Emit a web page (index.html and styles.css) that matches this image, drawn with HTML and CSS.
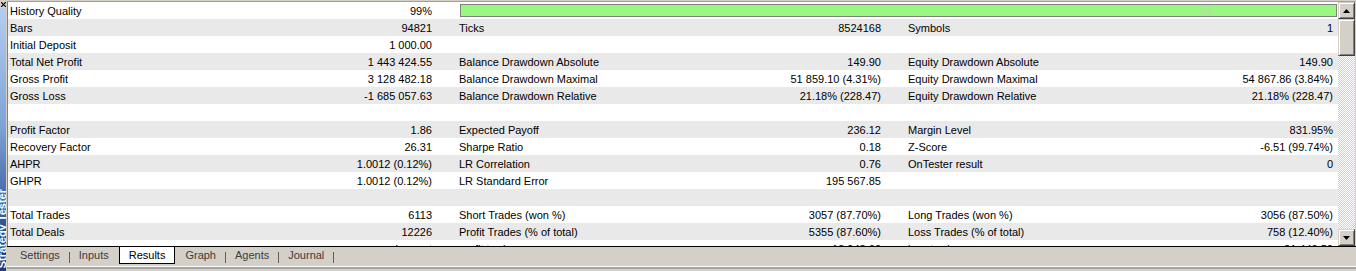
FILE: index.html
```html
<!DOCTYPE html>
<html lang="en">

<head>
  <meta charset="UTF-8" />
  <title>Strategy Tester - Results</title>
  <link rel="stylesheet" href="styles.css">
</head>

<body>
  <div class="tester">

    <!-- side caption strip -->
    <div class="side">
      <div class="side-close">
        <svg width="5" height="5" viewBox="0 0 5 5"><path d="M0 0L5 5M5 0L0 5" stroke="#000" stroke-width="1.2" /></svg>
      </div>
      <div class="side-title"><span>Strategy Tester</span></div>
    </div>

    <div class="panel">
      <div class="report">
        <div class="grid">
          <div class="row">
            <div class="cell"><span>History Quality</span><span>99%</span></div>
            <div class="cell quality"><div class="quality-bar"></div></div>
          </div>
          <div class="row">
            <div class="cell"><span>Bars</span><span>94821</span></div>
            <div class="cell"><span>Ticks</span><span>8524168</span></div>
            <div class="cell"><span>Symbols</span><span>1</span></div>
          </div>
          <div class="row">
            <div class="cell"><span>Initial Deposit</span><span>1 000.00</span></div>
            <div class="cell"></div>
            <div class="cell"></div>
          </div>
          <div class="row">
            <div class="cell"><span>Total Net Profit</span><span>1 443 424.55</span></div>
            <div class="cell"><span>Balance Drawdown Absolute</span><span>149.90</span></div>
            <div class="cell"><span>Equity Drawdown Absolute</span><span>149.90</span></div>
          </div>
          <div class="row">
            <div class="cell"><span>Gross Profit</span><span>3 128 482.18</span></div>
            <div class="cell"><span>Balance Drawdown Maximal</span><span>51 859.10 (4.31%)</span></div>
            <div class="cell"><span>Equity Drawdown Maximal</span><span>54 867.86 (3.84%)</span></div>
          </div>
          <div class="row">
            <div class="cell"><span>Gross Loss</span><span>-1 685 057.63</span></div>
            <div class="cell"><span>Balance Drawdown Relative</span><span>21.18% (228.47)</span></div>
            <div class="cell"><span>Equity Drawdown Relative</span><span>21.18% (228.47)</span></div>
          </div>
          <div class="row"></div>
          <div class="row">
            <div class="cell"><span>Profit Factor</span><span>1.86</span></div>
            <div class="cell"><span>Expected Payoff</span><span>236.12</span></div>
            <div class="cell"><span>Margin Level</span><span>831.95%</span></div>
          </div>
          <div class="row">
            <div class="cell"><span>Recovery Factor</span><span>26.31</span></div>
            <div class="cell"><span>Sharpe Ratio</span><span>0.18</span></div>
            <div class="cell"><span>Z-Score</span><span>-6.51 (99.74%)</span></div>
          </div>
          <div class="row">
            <div class="cell"><span>AHPR</span><span>1.0012 (0.12%)</span></div>
            <div class="cell"><span>LR Correlation</span><span>0.76</span></div>
            <div class="cell"><span>OnTester result</span><span>0</span></div>
          </div>
          <div class="row">
            <div class="cell"><span>GHPR</span><span>1.0012 (0.12%)</span></div>
            <div class="cell"><span>LR Standard Error</span><span>195 567.85</span></div>
            <div class="cell"></div>
          </div>
          <div class="row"></div>
          <div class="row">
            <div class="cell"><span>Total Trades</span><span>6113</span></div>
            <div class="cell"><span>Short Trades (won %)</span><span>3057 (87.70%)</span></div>
            <div class="cell"><span>Long Trades (won %)</span><span>3056 (87.50%)</span></div>
          </div>
          <div class="row">
            <div class="cell"><span>Total Deals</span><span>12226</span></div>
            <div class="cell"><span>Profit Trades (% of total)</span><span>5355 (87.60%)</span></div>
            <div class="cell"><span>Loss Trades (% of total)</span><span>758 (12.40%)</span></div>
          </div>
          <div class="row">
            <div class="cell"><span></span><span>Largest</span></div>
            <div class="cell"><span>profit trade</span><span>18 943.60</span></div>
            <div class="cell"><span>loss trade</span><span>-21 440.50</span></div>
          </div>
        </div>

        <div class="scrollbar">
          <div class="sb-btn">
            <svg width="7" height="4" viewBox="0 0 7 4"><path d="M3.5 0L7 4H0z" fill="#000" /></svg>
          </div>
          <div class="sb-thumb"></div>
          <div class="sb-track"></div>
          <div class="sb-btn">
            <svg width="7" height="4" viewBox="0 0 7 4"><path d="M0 0H7L3.5 4z" fill="#000" /></svg>
          </div>
        </div>
      </div>

      <div class="tabs">
        <div class="tab">Settings</div>
        <span class="sep"></span>
        <div class="tab">Inputs</div>
        <div class="tab active">Results</div>
        <div class="tab">Graph</div>
        <span class="sep"></span>
        <div class="tab">Agents</div>
        <span class="sep"></span>
        <div class="tab">Journal</div>
        <span class="sep"></span>
      </div>
      <div class="panel-foot"></div>
    </div>
  </div>
</body>

</html>
```

FILE: styles.css
```css
* {
  box-sizing: border-box;
}

body {
  margin: 0;
  width: 1356px;
  height: 271px;
  overflow: hidden;
  background: #d4d0c8;
  font-family: "Liberation Sans", Arial, sans-serif;
  font-size: 11px;
  color: #000;
}

.tester {
  display: flex;
  height: 271px;
}

/* side caption */
.side {
  width: 6px;
  display: flex;
  flex-direction: column;
  overflow: hidden;
}

.side-close {
  height: 8px;
  background: #d4d0c8;
  display: flex;
  align-items: center;
  justify-content: center;
}

.side-title {
  flex: 1;
  background: linear-gradient(#b3cdef, #7fa3d6 45%, #2c4d92 85%, #1d3a7c);
  overflow: hidden;
  display: flex;
  align-items: flex-end;
}

.side-title span {
  writing-mode: vertical-rl;
  transform: rotate(180deg);
  color: #fff;
  font-weight: bold;
  white-space: nowrap;
  line-height: 12px;
  margin: 0 0 3px -4px;
}

/* main panel */
.panel {
  flex: 1;
  min-width: 0;
  padding: 1px 0 0 1px;
  display: flex;
  flex-direction: column;
}

.report {
  display: flex;
  height: 245px;
  background: #fff;
  border-top: 1px solid #a0a0a0;
  border-left: 1px solid #808080;
  border-right: 1px solid #d4d0c8;
}

.grid {
  flex: 1;
  min-width: 0;
  overflow: hidden;
}

.row {
  display: grid;
  grid-template-columns: 426px 426px 1fr;
  column-gap: 23px;
  padding: 1px 3px 0 0;
  height: 17px;
  line-height: 16px;
}

.row:nth-child(even) {
  background: #e9e9e9;
}

.cell {
  display: flex;
  justify-content: space-between;
  padding: 0 2px;
  white-space: nowrap;
}

.quality {
  grid-column: 2 / 4;
  padding: 1px 0 0 3px;
  margin-right: -2px;
}

.quality-bar {
  flex: 1;
  height: 13px;
  border: 1px solid #808080;
  background: linear-gradient(90deg, #98f87f 739px, #a3ef90 739px, #a3ef90 752px, #98f87f 752px);
}

/* scrollbar */
.scrollbar {
  width: 17px;
  display: flex;
  flex-direction: column;
}

.sb-btn,
.sb-thumb {
  background: #d4d0c8;
  border: 1px solid;
  border-color: #d4d0c8 #404040 #404040 #d4d0c8;
  box-shadow: inset 1px 1px #fff, inset -1px -1px #808080;
}

.sb-btn {
  height: 17px;
  display: flex;
  align-items: center;
  justify-content: center;
}

.sb-thumb {
  height: 37px;
}

.sb-track {
  flex: 1;
  background: repeating-conic-gradient(#d4d0c8 0 25%, #fff 0 50%) 0 0 / 2px 2px;
}

/* tabs */
.tabs {
  height: 21px;
  display: flex;
  align-items: flex-start;
  padding-left: 4px;
  border-top: 1px solid #000;
  border-bottom: 1px solid #fff;
}

.tab {
  height: 17px;
  line-height: 17px;
  padding: 0 9px;
  color: #3c3c3c;
}

.tab.active {
  background: #fff;
  color: #000;
  border: 1px solid #000;
  border-top: 0;
  line-height: 16px;
  padding: 0 9px;
  margin: 0 1px;
}

.sep {
  width: 1px;
  height: 11px;
  margin-top: 5px;
  background: #606060;
}

.panel-foot {
  flex: 1;
  border-top: 2px solid #a4a4a4;
}
```
